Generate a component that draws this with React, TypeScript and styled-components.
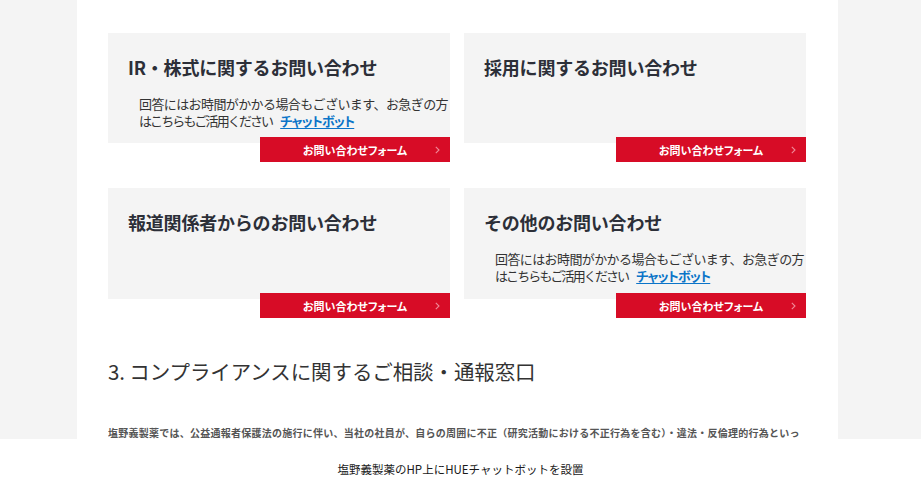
import React from "react";
import styled, { createGlobalStyle } from "styled-components";

const GlobalStyle = createGlobalStyle`
  html, body { margin: 0; padding: 0; background: #ffffff; }
  body { font-family: "Noto Sans CJK JP", "Noto Sans", sans-serif; color: #333; }
`;

const Shot = styled.div`
  height: 439px;
  background: #f4f4f4;
  overflow: hidden;
  display: flex;
  justify-content: flex-start;
`;

const Column = styled.div`
  margin-left: 77px;
  width: 761px;
  background: #ffffff;
  padding: 33px 32px 0 31px;
  box-sizing: border-box;
`;

const Grid = styled.div`
  display: grid;
  grid-template-columns: 342px 342px;
  column-gap: 14px;
  row-gap: 26px;
`;

const Card = styled.div`
  display: flex;
  flex-direction: column;
`;

const CardBox = styled.div<{ $h: number }>`
  background: #f4f4f4;
  height: ${(p) => p.$h}px;
  padding: 22px 20px 0;
  box-sizing: border-box;
`;

const Title = styled.h3`
  margin: 0;
  font-size: 18px;
  line-height: 24px;
  font-weight: 700;
  color: #2c2f38;
  letter-spacing: -0.2px;
`;

const Body = styled.p`
  margin: 16px 0 0 11px;
  font-size: 13px;
  line-height: 17px;
  color: #333;
  letter-spacing: -0.6px;
  white-space: nowrap;
`;

const Line2 = styled.span`
  letter-spacing: -1.9px;
`;

const Link = styled.a`
  margin-left: 8px;
  color: #0b74c8;
  font-weight: 700;
  text-decoration: underline;
  text-underline-offset: 2px;
  font-feature-settings: "palt";
  letter-spacing: -0.8px;
`;

const FormButton = styled.a`
  align-self: flex-end;
  position: relative;
  margin-top: -6px;
  width: 190px;
  height: 25px;
  background: #d70c26;
  color: #fff;
  font-size: 11px;
  font-weight: 700;
  font-feature-settings: "palt";
  display: flex;
  align-items: center;
  justify-content: center;
  text-decoration: none;
`;

const Chevron = styled.svg`
  position: absolute;
  right: 10px;
  top: 9px;
`;

const Heading = styled.h2`
  margin: 39px 0 0;
  font-size: 20.5px;
  line-height: 28px;
  font-weight: 400;
  color: #333;
  letter-spacing: -0.1px;
`;

const Para = styled.p`
  margin: 40px 0 0;
  font-size: 10px;
  line-height: 16px;
  font-weight: 700;
  color: #555;
  letter-spacing: 0.25px;
  white-space: nowrap;
  overflow: hidden;
`;

const Caption = styled.div`
  height: 61px;
  display: flex;
  align-items: center;
  justify-content: center;
  font-size: 11.5px;
  color: #1a1a1a;
  padding-bottom: 2px;
  box-sizing: border-box;
`;

type Item = { title: string; note?: boolean; h: number };

const items: Item[] = [
  { title: "IR・株式に関するお問い合わせ", note: true, h: 110 },
  { title: "採用に関するお問い合わせ", h: 110 },
  { title: "報道関係者からのお問い合わせ", h: 111 },
  { title: "その他のお問い合わせ", note: true, h: 111 },
];

export default function App() {
  return (
    <>
      <GlobalStyle />
      <Shot>
        <Column>
          <Grid>
            {items.map((it) => (
              <Card key={it.title}>
                <CardBox $h={it.h}>
                  <Title>{it.title}</Title>
                  {it.note && (
                    <Body>
                      回答にはお時間がかかる場合もございます、お急ぎの方
                      <br />
                      <Line2>はこちらもご活用ください</Line2>
                      <Link href="#">チャットボット</Link>
                    </Body>
                  )}
                </CardBox>
                <FormButton href="#">
                  お問い合わせフォーム
                  <Chevron width="5" height="8" viewBox="0 0 5 8">
                    <path d="M0.8 0.8 L4 4 L0.8 7.2" fill="none" stroke="#f08a98" strokeWidth="1.1" />
                  </Chevron>
                </FormButton>
              </Card>
            ))}
          </Grid>
          <Heading>3. コンプライアンスに関するご相談・通報窓口</Heading>
          <Para>
            塩野義製薬では、公益通報者保護法の施行に伴い、当社の社員が、自らの周囲に不正（研究活動における不正行為を含む）・違法・反倫理的行為といっ
          </Para>
        </Column>
      </Shot>
      <Caption>塩野義製薬のHP上にHUEチャットボットを設置</Caption>
    </>
  );
}
